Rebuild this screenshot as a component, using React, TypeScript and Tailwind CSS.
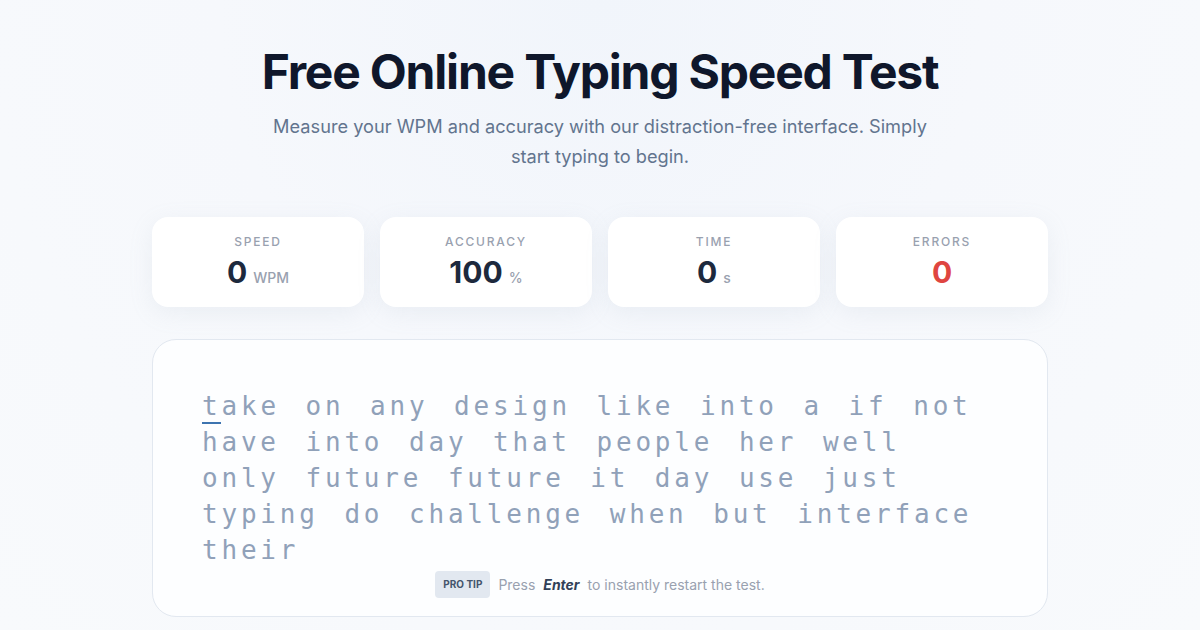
const words =
  "take on any design like into a if not have into day that people her well only future future it day use just typing do challenge when but interface their".split(
    " "
  );

const stats = [
  { label: "SPEED", value: "0", unit: "WPM", tone: "text-slate-800" },
  { label: "ACCURACY", value: "100", unit: "%", tone: "text-slate-800" },
  { label: "TIME", value: "0", unit: "s", tone: "text-slate-800" },
  { label: "ERRORS", value: "0", unit: "", tone: "text-[#df4540]" },
];

function StatCard({ label, value, unit, tone }: (typeof stats)[number]) {
  return (
    <div className="flex flex-col items-center rounded-2xl bg-white py-[17px] shadow-[0_6px_24px_rgba(148,163,184,0.12)]">
      <span className="text-xs font-medium tracking-[0.15em] text-gray-400">{label}</span>
      <div className="mt-1 flex items-baseline gap-1.5">
        <span className={`text-3xl font-bold leading-9 ${tone}`}>{value}</span>
        {unit && <span className="text-sm font-medium text-gray-400">{unit}</span>}
      </div>
    </div>
  );
}

export default function App() {
  return (
    <div
      className="min-h-[630px] w-full bg-[radial-gradient(ellipse_at_50%_0%,#f1f5fb_0%,#f6f8fc_45%,#f8fafc_100%)] text-slate-900"
      style={{ fontFamily: "Inter, 'Noto Sans', sans-serif" }}
    >
      <main className="mx-auto flex max-w-4xl flex-col items-center pt-12">
        <h1 className="text-5xl font-bold leading-[48px] tracking-tight text-slate-900">
          Free Online Typing Speed Test
        </h1>
        <p className="mt-4 max-w-2xl text-center text-[18.2px] leading-relaxed text-slate-500">
          Measure your WPM and accuracy with our distraction-free interface. Simply start typing to begin.
        </p>

        <section className="mt-[46px] grid w-full grid-cols-4 gap-4">
          {stats.map((s) => (
            <StatCard key={s.label} {...s} />
          ))}
        </section>

        <section className="mt-8 w-full rounded-3xl border border-slate-200 bg-[#fdfeff] px-[49px] pt-[48px] pb-[18px]">
          <div
            className="mr-[11px] text-[26px] leading-9 tracking-[3.8px] [word-spacing:6.2px] text-slate-400"
            style={{ fontFamily: "'DejaVu Sans Mono', 'Liberation Mono', monospace" }}
          >
            {words.map((w, i) => (
              <span key={i}>
                {i === 0 ? (
                  <>
                    <span className="relative">
                      {w[0]}
                      <span className="absolute bottom-[-3px] left-0 h-[2px] w-[19px] bg-[#3d74b0]" />
                    </span>
                    {w.slice(1)}
                  </>
                ) : (
                  w
                )}
                {i < words.length - 1 ? " " : ""}
              </span>
            ))}
          </div>

          <div className="mt-[3px] flex items-center justify-center gap-2 text-sm text-gray-400">
            <span className="rounded bg-slate-200 px-2 py-[6px] text-[10px] font-bold leading-[15px] text-slate-600">
              PRO TIP
            </span>
            <span>Press</span>
            <span className="font-bold italic text-slate-700">Enter</span>
            <span>to instantly restart the test.</span>
          </div>
        </section>
      </main>
    </div>
  );
}
